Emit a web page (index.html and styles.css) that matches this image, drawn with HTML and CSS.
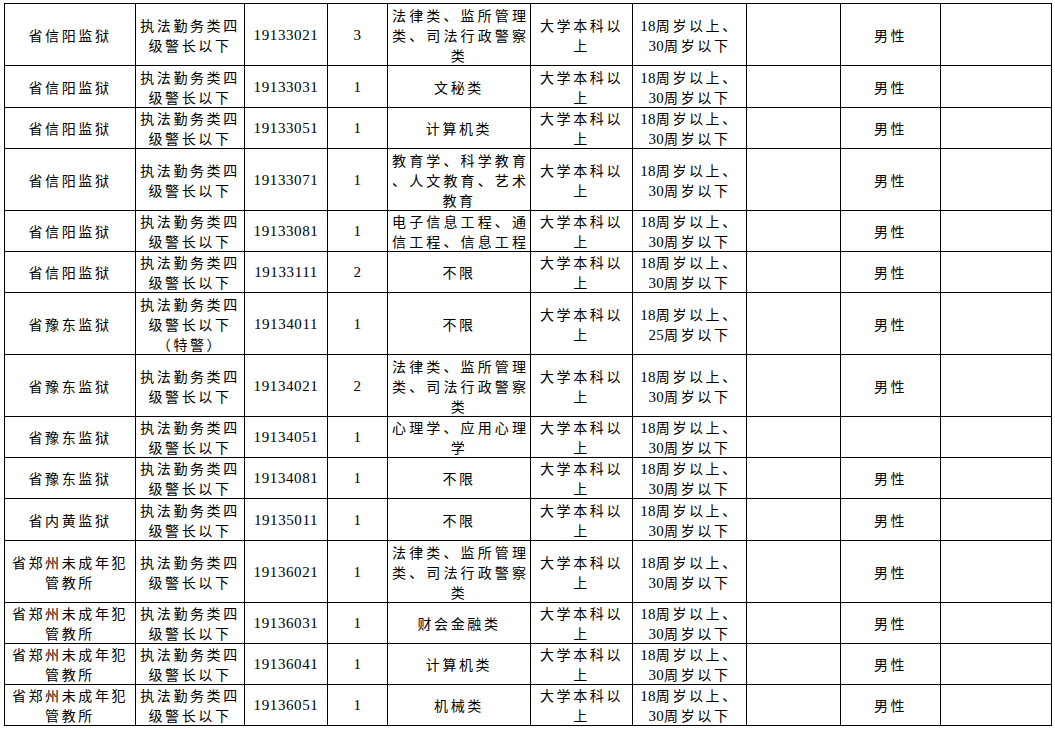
FILE: index.html
```html
<!DOCTYPE html>
<html lang="zh-CN">
<head>
<meta charset="utf-8">
<title>职位表</title>
<link rel="stylesheet" href="styles.css">
</head>
<body>
<div class="page">
<table class="grid">
<colgroup>
<col class="c1"><col class="c2"><col class="c3"><col class="c4"><col class="c5"><col class="c6"><col class="c7"><col class="c8"><col class="c9"><col class="c10">
</colgroup>
<tbody>
<tr class="h62">
<td>省信阳监狱</td>
<td>执法勤务类四<br>级警长以下</td>
<td class="num">19133021</td>
<td class="num">3</td>
<td class="major"><span class="j">法律类、监所管理</span><span class="j">类、司法行政警察</span><span class="c">类</span></td>
<td>大学本科以<br>上</td>
<td><span class="n">18</span>周岁以上、<br><span class="n">30</span>周岁以下</td>
<td></td>
<td>男性</td>
<td></td>
</tr>
<tr class="h42">
<td>省信阳监狱</td>
<td>执法勤务类四<br>级警长以下</td>
<td class="num">19133031</td>
<td class="num">1</td>
<td>文秘类</td>
<td>大学本科以<br>上</td>
<td><span class="n">18</span>周岁以上、<br><span class="n">30</span>周岁以下</td>
<td></td>
<td>男性</td>
<td></td>
</tr>
<tr class="h41">
<td>省信阳监狱</td>
<td>执法勤务类四<br>级警长以下</td>
<td class="num">19133051</td>
<td class="num">1</td>
<td>计算机类</td>
<td>大学本科以<br>上</td>
<td><span class="n">18</span>周岁以上、<br><span class="n">30</span>周岁以下</td>
<td></td>
<td>男性</td>
<td></td>
</tr>
<tr class="h62">
<td>省信阳监狱</td>
<td>执法勤务类四<br>级警长以下</td>
<td class="num">19133071</td>
<td class="num">1</td>
<td class="major"><span class="j">教育学、科学教育</span><span class="j">、人文教育、艺术</span><span class="c">教育</span></td>
<td>大学本科以<br>上</td>
<td><span class="n">18</span>周岁以上、<br><span class="n">30</span>周岁以下</td>
<td></td>
<td>男性</td>
<td></td>
</tr>
<tr class="h41">
<td>省信阳监狱</td>
<td>执法勤务类四<br>级警长以下</td>
<td class="num">19133081</td>
<td class="num">1</td>
<td class="major"><span class="j">电子信息工程、通</span><span class="j">信工程、信息工程</span></td>
<td>大学本科以<br>上</td>
<td><span class="n">18</span>周岁以上、<br><span class="n">30</span>周岁以下</td>
<td></td>
<td>男性</td>
<td></td>
</tr>
<tr class="h41">
<td>省信阳监狱</td>
<td>执法勤务类四<br>级警长以下</td>
<td class="num">19133111</td>
<td class="num">2</td>
<td>不限</td>
<td>大学本科以<br>上</td>
<td><span class="n">18</span>周岁以上、<br><span class="n">30</span>周岁以下</td>
<td></td>
<td>男性</td>
<td></td>
</tr>
<tr class="h62">
<td>省豫东监狱</td>
<td>执法勤务类四<br>级警长以下<br>（特警）</td>
<td class="num">19134011</td>
<td class="num">1</td>
<td>不限</td>
<td>大学本科以<br>上</td>
<td><span class="n">18</span>周岁以上、<br><span class="n">25</span>周岁以下</td>
<td></td>
<td>男性</td>
<td></td>
</tr>
<tr class="h62">
<td>省豫东监狱</td>
<td>执法勤务类四<br>级警长以下</td>
<td class="num">19134021</td>
<td class="num">2</td>
<td class="major"><span class="j">法律类、监所管理</span><span class="j">类、司法行政警察</span><span class="c">类</span></td>
<td>大学本科以<br>上</td>
<td><span class="n">18</span>周岁以上、<br><span class="n">30</span>周岁以下</td>
<td></td>
<td>男性</td>
<td></td>
</tr>
<tr class="h41">
<td>省豫东监狱</td>
<td>执法勤务类四<br>级警长以下</td>
<td class="num">19134051</td>
<td class="num">1</td>
<td class="major"><span class="j">心理学、应用心理</span><span class="c">学</span></td>
<td>大学本科以<br>上</td>
<td><span class="n">18</span>周岁以上、<br><span class="n">30</span>周岁以下</td>
<td></td>
<td></td>
<td></td>
</tr>
<tr class="h41">
<td>省豫东监狱</td>
<td>执法勤务类四<br>级警长以下</td>
<td class="num">19134081</td>
<td class="num">1</td>
<td>不限</td>
<td>大学本科以<br>上</td>
<td><span class="n">18</span>周岁以上、<br><span class="n">30</span>周岁以下</td>
<td></td>
<td>男性</td>
<td></td>
</tr>
<tr class="h42">
<td>省内黄监狱</td>
<td>执法勤务类四<br>级警长以下</td>
<td class="num">19135011</td>
<td class="num">1</td>
<td>不限</td>
<td>大学本科以<br>上</td>
<td><span class="n">18</span>周岁以上、<br><span class="n">30</span>周岁以下</td>
<td></td>
<td>男性</td>
<td></td>
</tr>
<tr class="h62">
<td>省郑州未成年犯<br>管教所</td>
<td>执法勤务类四<br>级警长以下</td>
<td class="num">19136021</td>
<td class="num">1</td>
<td class="major"><span class="j">法律类、监所管理</span><span class="j">类、司法行政警察</span><span class="c">类</span></td>
<td>大学本科以<br>上</td>
<td><span class="n">18</span>周岁以上、<br><span class="n">30</span>周岁以下</td>
<td></td>
<td>男性</td>
<td></td>
</tr>
<tr class="h41">
<td>省郑州未成年犯<br>管教所</td>
<td>执法勤务类四<br>级警长以下</td>
<td class="num">19136031</td>
<td class="num">1</td>
<td>财会金融类</td>
<td>大学本科以<br>上</td>
<td><span class="n">18</span>周岁以上、<br><span class="n">30</span>周岁以下</td>
<td></td>
<td>男性</td>
<td></td>
</tr>
<tr class="h41">
<td>省郑州未成年犯<br>管教所</td>
<td>执法勤务类四<br>级警长以下</td>
<td class="num">19136041</td>
<td class="num">1</td>
<td>计算机类</td>
<td>大学本科以<br>上</td>
<td><span class="n">18</span>周岁以上、<br><span class="n">30</span>周岁以下</td>
<td></td>
<td>男性</td>
<td></td>
</tr>
<tr class="h41">
<td>省郑州未成年犯<br>管教所</td>
<td>执法勤务类四<br>级警长以下</td>
<td class="num">19136051</td>
<td class="num">1</td>
<td>机械类</td>
<td>大学本科以<br>上</td>
<td><span class="n">18</span>周岁以上、<br><span class="n">30</span>周岁以下</td>
<td></td>
<td>男性</td>
<td></td>
</tr>
</tbody>
</table>
</div>
</body>
</html>
```
FILE: styles.css
```css
html, body {
  margin: 0;
  padding: 0;
  background: #ffffff;
}
.page {
  padding: 3px 0 0 4px;
}
.grid {
  border-collapse: collapse;
  table-layout: fixed;
  width: 1047px;
  font-family: "Noto Sans CJK SC", "Liberation Serif", sans-serif;
  font-size: 14px;
  line-height: 20px;
  color: #000;
}
.c1 { width: 131px; }
.c2 { width: 109px; }
.c3 { width: 83px; }
.c4 { width: 60px; }
.c5 { width: 143px; }
.c6 { width: 102px; }
.c7 { width: 114px; }
.c8 { width: 94px; }
.c9 { width: 100px; }
.c10 { width: 111px; }
.grid td {
  border: 1px solid #000;
  padding: 0;
  text-align: center;
  vertical-align: middle;
  letter-spacing: 2.6px;
  white-space: nowrap;
  font-weight: 400;
  overflow: hidden;
}
.h62 td { height: 61px; }
.h42 td { height: 41px; }
.h41 td { height: 40px; }
.grid td.num {
  font-family: "Liberation Serif", serif;
  font-size: 15px;
  letter-spacing: 0.6px;
}
.n {
  font-family: "Liberation Serif", serif;
  font-size: 15px;
  letter-spacing: 0.3px;
  line-height: 1;
}
.grid td.major {
  padding: 0 4px;
}
.j {
  display: block;
  text-align: justify;
  text-align-last: justify;
  letter-spacing: 0;
}
.c {
  display: block;
  text-align: center;
}
```
